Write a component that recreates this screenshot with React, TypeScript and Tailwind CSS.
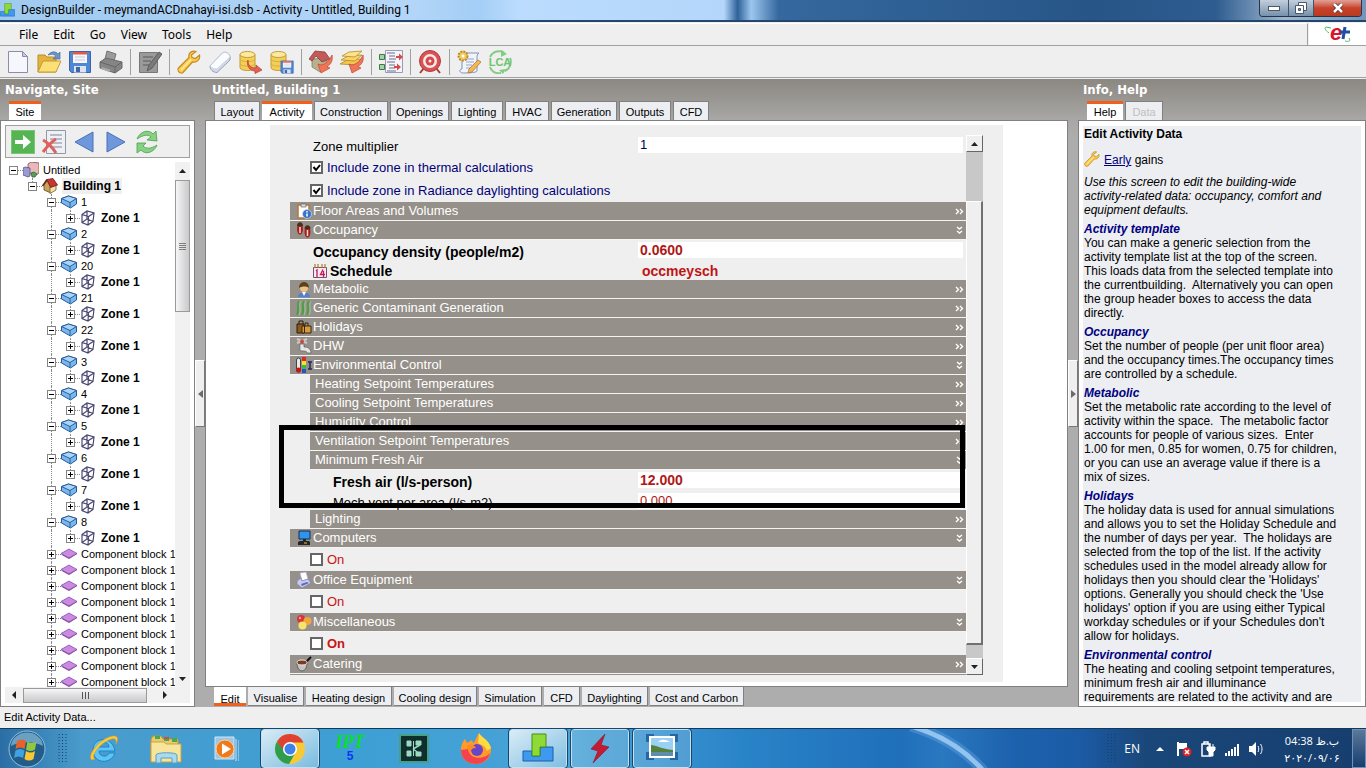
import type { ReactNode } from 'react';
import clsx from 'clsx';

/* ---------- toolbar icons (24px) ---------- */

function Svg({ children, size = 24, view = 24 }: { children: ReactNode; size?: number; view?: number }) {
  return (
    <svg width={size} height={size} viewBox={`0 0 ${view} ${view}`} fill="none" aria-hidden="true" className="block shrink-0">
      {children}
    </svg>
  );
}

const NewIcon = () => (
  <Svg>
    <path d="M2.5 1.5h14l5 5v16h-19z" fill="#f6f6fd" stroke="#8c8ca8" />
    <path d="M16.500 1.500v5h5z" fill="#c9c9e6" stroke="#8c8ca8" />
  </Svg>
);

const OpenIcon = () => (
  <Svg>
    <path d="M1 22V5h7l2 2h9v15z" fill="#e3b33c" stroke="#b98d2a" />
    <path d="M1 22 6 11h18l-5 11z" fill="#fbdf77" stroke="#c79a32" />
    <path d="M11 5c3-4 8-4 10-1l2-2v7h-7l3-3c-2-2-5-2-8-1z" fill="#6d93c4" stroke="#476f9f" strokeWidth=".7" />
  </Svg>
);

const SaveShape = ({ x = 0, y = 0, s = 1 }: { x?: number; y?: number; s?: number }) => (
  <g transform={`translate(${x} ${y}) scale(${s})`}>
    <path d="M1.500 1.500h21v21h-19l-2-2z" fill="#4f86d6" stroke="#3a65a8" />
    <path d="M5 2h14v11H5z" fill="#f7f7fa" />
    <path d="M5 2h14v2.500H5z" fill="#e8574b" />
    <path d="M7 7h10M7 10h10" stroke="#c5c8d4" />
    <path d="M6 16h12v6.500H6z" fill="#dde3ee" />
    <path d="M8 17h4v5H8z" fill="#3e68a8" />
  </g>
);
const SaveIcon = () => <Svg><SaveShape /></Svg>;

const PrintIcon = () => (
  <Svg>
    <path d="M8 1l9 3-2 7-9-2z" fill="#9b9b9b" stroke="#757575" />
    <path d="M1 12l6-4 16 4v6l-7 5-15-5z" fill="#858585" stroke="#6a6a6a" />
    <path d="M1 12l15 5 7-5M16 17v6" stroke="#666" />
    <path d="M3 17l9 3-2 2-8-3z" fill="#a9a9a9" />
  </Svg>
);

const EditIcon = () => (
  <Svg>
    <path d="M1.500 2.500h18v20h-18z" fill="#9a9a9a" stroke="#777" />
    <path d="M5 7h10M5 11h8M5 15h6" stroke="#707070" strokeWidth="1.500" />
    <path d="M21 2l3 2-10 14-5 3 2-6z" fill="#7b7b7b" stroke="#5f5f5f" />
  </Svg>
);

const WrenchIcon = ({ size = 24 }: { size?: number }) => (
  <Svg size={size}>
    <path
      d="M19 1.500c-4-1.500-8 1.500-7 6L1.500 18c-1 1-.5 3 .5 4s3 1.500 4 .5L15.500 12c4 1 8-2.500 7-7l-4 3.500-3.500-1L14.500 5z"
      fill="#fbcc4b"
      stroke="#c58a23"
      strokeWidth="1.200"
    />
    <path d="M4 20 14 9.500" stroke="#fdeaa5" strokeWidth="1.500" />
  </Svg>
);

const EraserIcon = () => (
  <Svg>
    <path d="M2 16 15 2.500c3-1 7 1.500 7 4.500v3L9 22.500c-4 0-7-3-7-6.500z" fill="#d5ddec" stroke="#929eb8" />
    <path d="M2 16 15 2.500c3-1 7 1.500 7 4.500L9 19c-4 0-5-1-7-3z" fill="#fafcff" stroke="#b3bdd2" strokeWidth=".6" />
  </Svg>
);

const DbShape = () => (
  <g>
    <path d="M1 4.500v13c0 4 15 4 15 0v-13z" fill="#f3cf57" stroke="#c49a34" />
    <path d="M1 9c0 3.500 15 3.500 15 0M1 13.500c0 3.500 15 3.500 15 0" stroke="#d8ae3e" />
    <ellipse cx="8.500" cy="4.500" rx="7.500" ry="3" fill="#fdeaa0" stroke="#c49a34" />
  </g>
);
const DbLoadIcon = () => (
  <Svg>
    <DbShape />
    <path d="M9 10c0 6 3 8 8 8v-3l6 5-7 3.500V21c-5 0-9-5-7-11z" fill="#e4604f" stroke="#b53d30" strokeWidth=".7" />
  </Svg>
);
const DbSaveIcon = () => (
  <Svg>
    <DbShape />
    <SaveShape x={10} y={10} s={0.59} />
  </Svg>
);

const HouseShape = () => (
  <g>
    <path d="M3 9v8l8 5 7-5V8z" fill="#b9b08f" stroke="#7a7460" strokeWidth=".7" />
    <path d="M0 9 6 1l10 1 5 7-8 3-6-6-4 5z" fill="#c25a58" stroke="#7d3433" strokeWidth=".7" />
  </g>
);
const RedArrow = () => (
  <path d="M23 5c1 6-1 9-5 12l3 1-9 5-3-9 3 1c5-1 8-4 11-10z" fill="#ef7458" stroke="#bd4a33" strokeWidth=".7" />
);
const HouseIcon = () => <Svg><HouseShape /><RedArrow /></Svg>;
const LayersIcon = () => (
  <Svg>
    <path d="M0 14l7-4 15-1-7 6z" fill="#f5c64c" stroke="#b58a27" strokeWidth=".8" />
    <path d="M1 10l7-4 14-1-7 6z" fill="#f9d467" stroke="#b58a27" strokeWidth=".8" />
    <path d="M2 6l7-4 13-1-7 6z" fill="#fde48c" stroke="#b58a27" strokeWidth=".8" />
    <RedArrow />
  </Svg>
);

const OptionsIcon = () => (
  <Svg>
    <path d="M6.500.5h17v22h-17z" fill="#f4f4fa" stroke="#9a9ab4" />
    <path d="M8 3h8M10 6h6M10 9h7M8 12h8M10 15h6M10 18h6M8 21h9" stroke="#6d6d86" />
    <path d="M.5 4.500h5v5h-5zM.5 14.500h5v5h-5z" fill="#a6d0a8" stroke="#3e7a46" />
    <path d="M17 6h3V3.500L24 7l-4 3.500V8h-3zM15 16h3v-2.500l4 3.500-4 3.500V18h-3z" fill="#d84a44" />
  </Svg>
);

const TargetIcon = () => (
  <Svg>
    <path d="M6 18l-4 5M18 18l4 5" stroke="#a33c3c" strokeWidth="2" />
    <circle cx="12" cy="11" r="10.500" fill="#dc5252" stroke="#b23a3a" />
    <circle cx="12" cy="11" r="7" fill="#f6eded" />
    <circle cx="12" cy="11" r="4.500" fill="#d94848" />
    <circle cx="12" cy="11" r="1.500" fill="#f6eded" />
  </Svg>
);

const ReportIcon = () => (
  <Svg>
    <path d="M5 3h17c-2 1-2 3-2 5v13c0 2-14 2-14 2-4 0-4-4-1-4z" fill="#f2f4fb" stroke="#7d92b8" />
    <path d="M9 9h8M9 12h8M9 15h6M9 18h5" stroke="#93a5c6" />
    <circle cx="6" cy="6" r="4.500" fill="#f3cc60" stroke="#b98c2c" strokeDasharray="2 1" strokeWidth="2" />
    <circle cx="6" cy="6" r="1.500" fill="#fff" />
    <path d="M21 10l3 2-9 10-4 1 1-4z" fill="#f4b756" stroke="#a9702a" strokeWidth=".7" />
  </Svg>
);

const LcaIcon = () => (
  <Svg>
    <path d="M2 7C5 1 12 0 16 2.500M22 8c2 4 0 11-5 13M13 23C7 24 3 21 2 17" stroke="#84cc84" strokeWidth="2" />
    <path d="M13 0l6 4-6 3zM15 24l-4-4 7-1z" fill="#84cc84" />
    <text x="12" y="16" textAnchor="middle" fontSize="11" fontWeight="bold" fill="#6fc26f" fontFamily="Liberation Sans, sans-serif">LCA</text>
  </Svg>
);

/* ---------- navigator icons ---------- */

const GoIcon = () => (
  <Svg>
    <rect x=".5" y=".5" width="23" height="23" fill="#56b553" stroke="#7cc479" />
    <path d="M4 10h8V5l8 7-8 7v-5H4z" fill="#fff" />
  </Svg>
);
const DeleteIcon = () => (
  <Svg>
    <path d="M4.500.5h19v23h-19z" fill="#eef0f6" stroke="#9099a8" />
    <path d="M8 5h12M8 9h12M8 13h12M8 17h12" stroke="#7c8799" />
    <path d="M1 10c4 2 10 8 13 13M14 9C9 12 4 18 1 22" stroke="#e0605c" strokeWidth="3" />
  </Svg>
);
const PrevIcon = () => <Svg><path d="M20 2v20L2 12z" fill="#6e97dc" stroke="#4b70b8" /></Svg>;
const NextIcon = () => <Svg><path d="M3 2v20l18-10z" fill="#6e97dc" stroke="#4b70b8" /></Svg>;
const RefreshIcon = () => (
  <Svg>
    <path d="M2 9C5 1 14-1 18 4l3-3 1 10-10-1 4-3c-3-3-8-2-14 2z" fill="#86d183" stroke="#4e9f4e" strokeWidth=".8" />
    <path d="M22 15c-3 8-12 10-16 5l-4 3V13h9l-3 3c3 3 8 3 14-1z" fill="#86d183" stroke="#4e9f4e" strokeWidth=".8" />
  </Svg>
);

/* ---------- tree icons (16px) ---------- */

const SiteIcon = () => (
  <Svg size={16} view={16}>
    <path d="M5 2l3-2 8 1v10l-3 2-8-2z" fill="#e9b9b9" stroke="#7d4a4a" strokeWidth=".8" />
    <path d="M0 6l2-1 5 1v8l-2 1-5-2z" fill="#9c9ad0" stroke="#54528a" strokeWidth=".8" />
    <path d="M8 11l3-1 3 2-2 3-3 0z" fill="#57a05b" stroke="#2f6a33" strokeWidth=".8" />
  </Svg>
);
const BuildingIcon = () => (
  <Svg size={16} view={16}>
    <path d="M2 7l3-4 4 6v6L2 12z" fill="#c9a35c" stroke="#5e4a20" strokeWidth=".8" />
    <path d="M8 9l6-2v5l-6 3.500z" fill="#f5e0a8" stroke="#6f5a2d" strokeWidth=".8" />
    <path d="M5 1.500 11 .5 15.500 7 8.500 9.500z" fill="#c9352f" stroke="#6d1d18" strokeWidth=".8" />
    <path d="M5 1.500.5 8" stroke="#6d1d18" strokeWidth="1.500" />
  </Svg>
);
const BlockIcon = () => (
  <Svg size={16} view={16}>
    <path d="M.5 4.500 7.500 2l8 2.500v5.500l-6 4-9-5z" fill="#77b7f2" stroke="#2c5c94" />
    <path d="M.5 4.500 9 8.500l6.500-4L7.500 2z" fill="#a9d5fb" stroke="#2c5c94" />
    <path d="M9 8.500v5" stroke="#2c5c94" />
  </Svg>
);
const ZoneIcon = () => (
  <Svg size={16} view={16}>
    <path d="M2 4.500 7 1l7 2-1 8.500-5 3.500-6-2.500zM2 4.500l6.500 2L14 3M8.500 6.500 8 15M7 1v8L2 12.500M7 9l6 2.500" stroke="#4b4770" strokeWidth="1.200" />
  </Svg>
);
const ComponentIcon = () => (
  <Svg size={16} view={16}>
    <path d="M0 8.500 8 13l8-5v-1z" fill="#7b3f94" />
    <path d="M0 7.500 8 3l8 4.500-8 4.500z" fill="#c98be0" stroke="#8a4ba6" strokeWidth=".8" />
  </Svg>
);

/* ---------- section icons (16px) ---------- */

const sectionIcons: Record<string, ReactNode> = {
  floor: (
    <Svg size={16} view={16}>
      <path d="M2 2h11v13H2z" fill="#fff" stroke="#b5773a" strokeWidth="1.500" />
      <path d="M5 1h5v3H5z" fill="#dcdcdc" stroke="#666" strokeWidth=".7" />
      <circle cx="11" cy="11" r="4.500" fill="#3774c8" stroke="#cfe0f6" strokeWidth=".7" />
      <path d="M11 10.500v3M11 8v1.500" stroke="#fff" strokeWidth="1.500" />
    </Svg>
  ),
  occupancy: (
    <Svg size={16} view={16}>
      <ellipse cx="4" cy="7" rx="3" ry="5.500" fill="#a71f1f" />
      <path d="M1 4c0-5 6-5 6 0z" fill="#463019" />
      <ellipse cx="11.500" cy="10" rx="3" ry="5.500" fill="#a71f1f" />
      <path d="M8.500 7c0-5 6-5 6 0z" fill="#463019" />
      <path d="M4 5v6M11.500 8v6" stroke="#f0d8c8" strokeWidth="1.500" />
    </Svg>
  ),
  metabolic: (
    <Svg size={16} view={16}>
      <path d="M2 16c0-6 12-6 12 0z" fill="#4d83d3" />
      <path d="M6 11l2 4 2-4z" fill="#fff" />
      <circle cx="8" cy="7" r="4" fill="#edc08c" />
      <path d="M3 7c0-8 10-8 10 0-2-2-7-2-10 0z" fill="#59411c" />
    </Svg>
  ),
  contaminant: (
    <Svg size={16} view={16}>
      <path d="M3 1C0 5 4 9 1 15M8 1C5 5 9 9 6 15M13 1c-3 4 1 8-2 14" stroke="#4f9e45" strokeWidth="2" />
      <path d="M5 1C2 5 6 9 3 15M10 1C7 5 11 9 8 15M15 1c-3 4 1 8-2 14" stroke="#a5d39a" strokeWidth=".8" />
    </Svg>
  ),
  holidays: (
    <Svg size={16} view={16}>
      <path d="M1 5h7v9H1z" fill="#8a5a1e" stroke="#2c1b06" />
      <path d="M3 5V2h4v3" stroke="#2c1b06" />
      <path d="M6 7h9v7H6z" fill="#d79a3c" stroke="#3b2508" />
      <path d="M9 7V4h3v3M8.500 7v7" stroke="#3b2508" />
    </Svg>
  ),
  dhw: (
    <Svg size={16} view={16}>
      <path d="M1 1l10 4M11 1 1 5" stroke="#c9c9c9" strokeWidth="2" />
      <circle cx="6" cy="3.500" r="2" fill="#d0492f" />
      <path d="M4 6h4v3c3 0 7 1 7 6h-4c0-2-2-2-5-2s-2-3-2-7z" fill="#e6e6e6" stroke="#5f5f5f" strokeWidth=".7" />
    </Svg>
  ),
  environment: (
    <Svg size={16} view={16}>
      <rect x="0.500" y="1" width="4" height="14" rx="2" fill="#e8e8e8" stroke="#444" />
      <circle cx="2.500" cy="13" r="2.500" fill="#c5151c" />
      <path d="M6 0h4v4H6z" fill="#e52520" />
      <path d="M6 4h4v4H6z" fill="#f3e531" />
      <path d="M6 8h4v4H6z" fill="#41b73b" />
      <path d="M6 12h4v4H6z" fill="#2c4fd0" />
      <path d="M12 5h4M12 12h4M14 5v7" stroke="#222a55" strokeWidth="1.500" />
    </Svg>
  ),
  computers: (
    <Svg size={16} view={16}>
      <path d="M3 1h11v8H3z" fill="#2b95f0" stroke="#1b2c4a" />
      <path d="M7 9h3v2H7zM2 12l2-1h9l1 1v3H2z" fill="#22252c" />
      <path d="M8 13h3" stroke="#dccd35" />
    </Svg>
  ),
  office: (
    <Svg size={16} view={16}>
      <path d="M4 1l6-1 2 7-6 2z" fill="#fff" stroke="#aab0d4" strokeWidth=".7" />
      <path d="M1 9l4-3 1 3 6-2 3 4-9 5-5-4z" fill="#c7cbee" stroke="#7d82b4" strokeWidth=".7" />
      <path d="M5 12l6-2 2 1-7 3z" fill="#6468ac" />
    </Svg>
  ),
  misc: (
    <Svg size={16} view={16}>
      <circle cx="5" cy="5" r="4" fill="#d93434" />
      <circle cx="11.500" cy="7" r="4" fill="#f2a53d" />
      <circle cx="6.500" cy="11.500" r="4" fill="#fbe36a" />
      <circle cx="4" cy="4" r="1.200" fill="#f6a3a3" />
    </Svg>
  ),
  catering: (
    <Svg size={16} view={16}>
      <path d="M9 7l6-6" stroke="#111" strokeWidth="2" />
      <path d="M1 6c0 5 1 8 5 9 4-1 5-4 5-9z" fill="#c4c4c4" stroke="#444" strokeWidth=".7" />
      <ellipse cx="6" cy="6.500" rx="5" ry="2.500" fill="#7a3a1e" stroke="#e8e8e8" />
    </Svg>
  ),
};

const CalendarIcon = () => (
  <Svg size={14} view={14}>
    <path d="M.5 3.500h13v10H.5z" fill="#fbeaf1" stroke="#77506a" />
    <path d="M2 0v4M5 0v4M9 0v4M12 0v4" stroke="#b07a2c" strokeWidth="1.200" />
    <path d="M3 7l1-1v7M10 5.500 7.500 10.500H12M10.500 7v6" stroke="#c4195a" strokeWidth="1.300" />
  </Svg>
);

/* ---------- generic pieces ---------- */

type Tab = { label: string; width: string; active?: boolean; disabled?: boolean };

const topTabs: Tab[] = [
  { label: 'Layout', width: 'w-[46px]' },
  { label: 'Activity', width: 'w-[50px]', active: true },
  { label: 'Construction', width: 'w-[74px]' },
  { label: 'Openings', width: 'w-[59px]' },
  { label: 'Lighting', width: 'w-[52px]' },
  { label: 'HVAC', width: 'w-[44px]' },
  { label: 'Generation', width: 'w-[66px]' },
  { label: 'Outputs', width: 'w-[52px]' },
  { label: 'CFD', width: 'w-[36px]' },
];

const bottomTabs: Tab[] = [
  { label: 'Edit', width: 'w-[32px]', active: true },
  { label: 'Visualise', width: 'w-[56px]' },
  { label: 'Heating design', width: 'w-[86px]' },
  { label: 'Cooling design', width: 'w-[83px]' },
  { label: 'Simulation', width: 'w-[63px]' },
  { label: 'CFD', width: 'w-[36px]' },
  { label: 'Daylighting', width: 'w-[66px]' },
  { label: 'Cost and Carbon', width: 'w-[94px]' },
];

function tabStyle(tab: Tab, bottom?: boolean) {
  if (bottom) {
    return tab.active
      ? 'bg-white border-b-[3px] border-b-[#f0601c] pt-[5px]'
      : 'bg-[#eceef2] border-r border-b border-[#808080] pt-[3px]';
  }
  return tab.active
    ? 'bg-white border-t-[3px] border-t-[#f0601c]'
    : 'bg-[#eceef2] border-t border-r border-l border-[#808080] pt-[2px]';
}

function Tabs({ tabs, bottom }: { tabs: Tab[]; bottom?: boolean }) {
  return (
    <div className={clsx('flex shrink-0 gap-[2px] pl-[9px]', bottom ? 'h-5 pb-px' : 'h-[19px]')}>
      {tabs.map((tab) => (
        <button
          key={tab.label}
          disabled={tab.disabled}
          className={clsx(
            'h-full shrink-0 whitespace-nowrap text-center text-[11px] leading-[14px]',
            tab.width,
            tabStyle(tab, bottom),
            tab.disabled && 'text-[#c0c0c0]',
          )}
        >
          {tab.label}
        </button>
      ))}
    </div>
  );
}

function Splitter({ dir }: { dir: 'left' | 'right' }) {
  return (
    <div className="flex w-[10px] shrink-0 items-start pt-[281px]">
      <button aria-label={`Collapse ${dir}`} className="flex h-[67px] w-full items-center justify-center border border-t-white border-r-[#777] border-b-[#777] border-l-white bg-[#efefef]">
        <svg width="5" height="8" viewBox="0 0 5 8">
          <path d={dir === 'left' ? 'M5 0v8L0 4z' : 'M0 0v8l5-4z'} fill="#6b6b6b" />
        </svg>
      </button>
    </div>
  );
}

const Arrow = ({ d }: { d: string }) => (
  <svg width="8" height="8" viewBox="0 0 8 8"><path d={d} fill="#222" /></svg>
);
const UP = 'M0 6h7L3.500 2z';
const DOWN = 'M0 2h7L3.500 6z';
const LEFT = 'M6 0v8L2 4z';
const RIGHT = 'M2 0v8l4-4z';

/* ---------- navigator ---------- */

type Node = { label: string; depth: number; kind: 'site' | 'building' | 'block' | 'zone' | 'component' };

const tree: Node[] = [
  { label: 'Untitled', depth: 0, kind: 'site' },
  { label: 'Building 1', depth: 1, kind: 'building' },
  ...['1', '2', '20', '21', '22', '3', '4', '5', '6', '7', '8'].flatMap((n): Node[] => [
    { label: n, depth: 2, kind: 'block' },
    { label: 'Zone 1', depth: 3, kind: 'zone' },
  ]),
  ...Array.from({ length: 9 }, (): Node => ({ label: 'Component block 1', depth: 2, kind: 'component' })),
];

const nodeIcons: Record<Node['kind'], ReactNode> = {
  site: <SiteIcon />,
  building: <BuildingIcon />,
  block: <BlockIcon />,
  zone: <ZoneIcon />,
  component: <ComponentIcon />,
};

const indents = ['pl-0', 'pl-[19px]', 'pl-[38px]', 'pl-[57px]'];

function TreeRow({ node }: { node: Node }) {
  const open = node.kind !== 'zone' && node.kind !== 'component';
  const bold = node.kind === 'zone' || node.kind === 'building';
  return (
    <li className={clsx('relative flex h-4 items-center', indents[node.depth])}>
      {node.depth >= 2 && <span className="absolute top-0 left-[42px] h-full border-l border-dotted border-[#888]" />}
      {node.depth === 3 && <span className="absolute top-0 left-[61px] h-2 border-l border-dotted border-[#888]" />}
      {node.depth === 1 && <span className="absolute top-0 left-[23px] h-2 border-l border-dotted border-[#888]" />}
      <button aria-label={open ? 'Collapse' : 'Expand'} className="relative block size-[9px] shrink-0">
        <svg width="9" height="9" viewBox="0 0 9 9" className="block">
          <rect x=".5" y=".5" width="8" height="8" fill="#fff" stroke="#848484" />
          <path d={open ? 'M2 4.500h5' : 'M2 4.500h5M4.500 2v5'} stroke="#000" />
        </svg>
      </button>
      <span className="w-[5px] shrink-0 border-t border-dotted border-[#888]" />
      {nodeIcons[node.kind]}
      <span
        className={clsx(
          'ml-1 leading-4 whitespace-nowrap',
          bold ? 'px-px text-[12px] font-bold' : 'text-[11px]',
          node.kind === 'building' && 'bg-[#efefef]',
        )}
      >
        {node.label}
      </span>
    </li>
  );
}

function Navigator() {
  return (
    <aside className="flex w-[195px] shrink-0 flex-col">
      <PaneTitle className="pl-[5px]">Navigate, Site</PaneTitle>
      <Tabs tabs={[{ label: 'Site', width: 'w-[32px]', active: true }]} />
      <div className="flex min-h-0 flex-1 flex-col border border-[#808080] bg-white px-1 pt-1 pb-[3px]">
        <div className="flex h-[33px] shrink-0 items-center gap-[7px] border border-[#a0a0a0] bg-[#efefef] pl-[5px]">
          <button aria-label="Go"><GoIcon /></button>
          <button aria-label="Delete"><DeleteIcon /></button>
          <button aria-label="Previous"><PrevIcon /></button>
          <button aria-label="Next"><NextIcon /></button>
          <button aria-label="Refresh"><RefreshIcon /></button>
        </div>
        <div className="mt-1 flex min-h-0 flex-1">
          <ul className="min-w-0 flex-1 overflow-hidden pl-1">
            {tree.map((node, i) => <TreeRow key={i} node={node} />)}
          </ul>
          <div className="flex w-[15px] shrink-0 flex-col items-center bg-[#f1f1f1]">
            <span className="flex h-[18px] items-center"><Arrow d={UP} /></span>
            <div className="flex h-[132px] w-[15px] items-center justify-center border border-[#9a9a9a] bg-linear-to-r from-[#f6f6f6] to-[#c9c9cc]">
              <svg width="7" height="7" viewBox="0 0 7 7"><path d="M0 .5h7M0 2.500h7M0 4.500h7M0 6.500h7" stroke="#666" strokeWidth=".8" /></svg>
            </div>
            <span className="mt-auto flex h-4 items-center"><Arrow d={DOWN} /></span>
          </div>
        </div>
        <div className="flex h-4 shrink-0 items-center bg-[#f1f1f1] pr-4">
          <span className="flex w-[18px] justify-center"><Arrow d={LEFT} /></span>
          <div className="flex h-[15px] w-[124px] items-center justify-center border border-[#9a9a9a] bg-linear-to-b from-[#f6f6f6] to-[#c9c9cc]">
            <svg width="7" height="7" viewBox="0 0 7 7"><path d="M.5 0v7M3.500 0v7M6.500 0v7" stroke="#555" /></svg>
          </div>
          <span className="ml-auto flex w-[18px] justify-center"><Arrow d={RIGHT} /></span>
        </div>
      </div>
    </aside>
  );
}

function PaneTitle({ children, className }: { children: ReactNode; className?: string }) {
  return (
    <h2 className={clsx("h-[22px] shrink-0 font-['DejaVu_Sans_Condensed','DejaVu_Sans',sans-serif] text-[13px] leading-[22px] font-bold text-white", className)}>
      {children}
    </h2>
  );
}

/* ---------- activity form ---------- */

function Section({ title, icon, open, sub }: { title: string; icon?: string; open?: boolean; sub?: boolean }) {
  return (
    <button
      type="button"
      className={clsx(
        'flex h-[19px] shrink-0 items-center border-b border-[#f4f4f4] bg-[#959089] pr-[2px] text-[13px] leading-4 text-white',
        sub ? 'ml-5 pl-[5px]' : 'gap-px pl-[6px]',
      )}
    >
      {icon && sectionIcons[icon]}
      <span>{title}</span>
      <svg width="9" height="9" viewBox="0 0 9 9" fill="none" className="ml-auto">
        <path d={open ? 'M2 1l2.500 2L7 1M2 5l2.500 2L7 5' : 'M1 2l2.500 2.500L1 7M5 2l2.500 2.500L5 7'} stroke="#fff" strokeWidth="1.400" />
      </svg>
    </button>
  );
}

function Field({ id, label, value, bold, sub, navy, tall }: { id: string; label: string; value: string; bold?: boolean; sub?: boolean; navy?: boolean; tall?: boolean }) {
  return (
    <div className={clsx('flex shrink-0 items-start pt-[2px] pr-[3px]', tall ? 'h-[21px]' : 'h-[19px]', bold ? 'text-[14px] font-bold' : 'text-[13px]')}>
      <label htmlFor={id} className={clsx('w-[348px] shrink-0 pt-[2px] leading-4', sub ? 'pl-[43px]' : 'pl-[23px]')}>{label}</label>
      <input
        id={id}
        defaultValue={value}
        className={clsx('h-4 min-w-0 flex-1 bg-white px-[2px] leading-4 outline-none', navy ? 'text-[#000050]' : 'text-[#b01818]')}
      />
    </div>
  );
}

function Check({ id, label, checked, navy, bold }: { id: string; label: string; checked?: boolean; navy?: boolean; bold?: boolean }) {
  return (
    <div className="flex h-[23px] shrink-0 items-center gap-1 pl-5 text-[13px]">
      <span className="relative flex size-[13px]">
        <input id={id} type="checkbox" defaultChecked={checked} className="peer size-[13px] appearance-none border-2 border-[#666] bg-white" />
        <svg width="13" height="13" viewBox="0 0 13 13" fill="none" className="pointer-events-none absolute inset-0 hidden peer-checked:block">
          <path d="M3.500 6l2.500 3 4-5" stroke="#000" strokeWidth="2" />
        </svg>
      </span>
      <label htmlFor={id} className={clsx('leading-4', navy ? 'text-[#000078]' : 'text-[#c81414]', bold && 'font-bold')}>{label}</label>
    </div>
  );
}

function ActivityForm() {
  return (
    <div className="relative mx-16 my-1 flex min-h-0 flex-1 bg-[#efefef] px-5 pt-[10px] pb-[7px]">
      <form className="flex min-w-0 flex-1 flex-col overflow-hidden">
        <Field id="multiplier" label="Zone multiplier" value="1" navy tall />
        <Check id="thermal" label="Include zone in thermal calculations" checked navy />
        <Check id="radiance" label="Include zone in Radiance daylighting calculations" checked navy />
        <Section icon="floor" title="Floor Areas and Volumes" />
        <Section icon="occupancy" title="Occupancy" open />
        <Field id="density" label="Occupancy density (people/m2)" value="0.0600" bold tall />
        <div className="flex h-[19px] shrink-0 items-center text-[14px] font-bold">
          <div className="flex w-[348px] shrink-0 items-center gap-[3px] pl-[23px]">
            <CalendarIcon />
            <label htmlFor="schedule" className="leading-4">Schedule</label>
          </div>
          <input id="schedule" defaultValue="occmeysch" className="h-4 min-w-0 flex-1 px-1 leading-4 text-[#c01414] outline-none" />
        </div>
        <Section icon="metabolic" title="Metabolic" />
        <Section icon="contaminant" title="Generic Contaminant Generation" />
        <Section icon="holidays" title="Holidays" />
        <Section icon="dhw" title="DHW" />
        <Section icon="environment" title="Environmental Control" open />
        <Section sub title="Heating Setpoint Temperatures" />
        <Section sub title="Cooling Setpoint Temperatures" />
        <Section sub title="Humidity Control" />
        <Section sub title="Ventilation Setpoint Temperatures" />
        <Section sub title="Minimum Fresh Air" open />
        <Field id="fresh" label="Fresh air (l/s-person)" value="12.000" sub bold tall />
        <Field id="mech" label="Mech vent per area (l/s-m2)" value="0.000" sub />
        <Section sub title="Lighting" />
        <Section icon="computers" title="Computers" open />
        <Check id="computers" label="On" />
        <Section icon="office" title="Office Equipment" open />
        <Check id="office" label="On" />
        <Section icon="misc" title="Miscellaneous" open />
        <Check id="misc" label="On" bold />
        <Section icon="catering" title="Catering" />
        <div className="h-[2px] shrink-0 bg-[#959089]" />
      </form>
      <div className="flex w-[17px] shrink-0 flex-col bg-[#c8c8c8]">
        <button aria-label="Scroll up" className="flex h-[17px] items-center justify-center border border-t-white border-r-[#666] border-b-[#666] border-l-white bg-[#efefef]"><Arrow d={UP} /></button>
        <div className="mt-[49px] mb-[13px] flex-1 border-t border-r-2 border-b-2 border-l border-t-white border-r-[#707070] border-b-[#707070] border-l-white bg-[#efefef]" />
        <button aria-label="Scroll down" className="flex h-[17px] items-center justify-center border border-t-white border-r-[#666] border-b-[#666] border-l-white bg-[#efefef]"><Arrow d={DOWN} /></button>
      </div>
      {/* highlight around the fresh air group */}
      <div className="pointer-events-none absolute top-[300px] right-[38px] left-[9px] h-[83px] border-[5px] border-black" />
    </div>
  );
}

/* ---------- help ---------- */

const helpTopics = [
  {
    title: 'Activity template',
    lines: [
      'You can make a generic selection from the',
      'activity template list at the top of the screen.',
      'This loads data from the selected template into',
      'the currentbuilding.  Alternatively you can open',
      'the group header boxes to access the data',
      'directly.',
    ],
  },
  {
    title: 'Occupancy',
    lines: ['Set the number of people (per unit floor area)', 'and the occupancy times.The occupancy times', 'are controlled by a schedule.'],
  },
  {
    title: 'Metabolic',
    lines: [
      'Set the metabolic rate according to the level of',
      'activity within the space.  The metabolic factor',
      'accounts for people of various sizes.  Enter',
      '1.00 for men, 0.85 for women, 0.75 for children,',
      'or you can use an average value if there is a',
      'mix of sizes.',
    ],
  },
  {
    title: 'Holidays',
    lines: [
      'The holiday data is used for annual simulations',
      'and allows you to set the Holiday Schedule and',
      'the number of days per year.  The holidays are',
      'selected from the top of the list. If the activity',
      'schedules used in the model already allow for',
      "holidays then you should clear the 'Holidays'",
      "options. Generally you should check the 'Use",
      "holidays' option if you are using either Typical",
      "workday schedules or if your Schedules don't",
      'allow for holidays.',
    ],
  },
  {
    title: 'Environmental control',
    lines: ['The heating and cooling setpoint temperatures,', 'minimum fresh air and illuminance', 'requirements are related to the activity and are'],
  },
];

function Help() {
  return (
    <aside className="flex w-[288px] shrink-0 flex-col">
      <PaneTitle className="pl-[5px]">Info, Help</PaneTitle>
      <Tabs tabs={[{ label: 'Help', width: 'w-[36px]', active: true }, { label: 'Data', width: 'w-[38px]', disabled: true }]} />
      <div className="flex min-h-0 flex-1 flex-col border border-[#808080] bg-white p-1 pt-[5px]">
        <article className="min-h-0 flex-1 overflow-hidden bg-[#eceef2] pl-px text-[12px] leading-[14px] whitespace-pre">
          <h3 className="leading-4 font-bold">Edit Activity Data</h3>
          <p className="mt-[9px] flex items-end gap-1">
            <WrenchIcon size={16} />
            <span><a href="#early" className="text-[#000080] underline">Early</a> gains</span>
          </p>
          <p className="mt-[8px] italic">{'Use this screen to edit the building-wide\nactivity-related data: occupancy, comfort and\nequipment defaults.'}</p>
          {helpTopics.map((topic) => (
            <section key={topic.title} className="mt-[5px]">
              <h4 className="font-bold text-[#000080] italic">{topic.title}</h4>
              <p>{topic.lines.join('\n')}</p>
            </section>
          ))}
        </article>
      </div>
    </aside>
  );
}

/* ---------- taskbar ---------- */

const BuilderIcon = ({ size = 32 }: { size?: number }) => (
  <Svg size={size} view={32}>
    <path d="M1 18h9v5h8v-9h13v14H1z" fill="#3d9af0" stroke="#1b5ea8" />
    <path d="M10 1h14v13h-6v9h-8z" fill="#8edb37" stroke="#4c8b16" />
  </Svg>
);

const taskItems: { name: string; framed?: boolean; lit?: boolean; icon: ReactNode }[] = [
  {
    name: 'Internet Explorer',
    icon: (
      <Svg size={32} view={32}>
        <path d="M27 18H11c0 6 8 7 10 2h6C23 32 5 31 5 17S25 3 27 18zM11 14h10c0-6-9-6-10 0z" fill="#5cc5f5" stroke="#2184c6" />
        <path d="M4 27C-2 24 11 5 25 3c6-1 5 5 3 8 1-6-2-6-7-4C11 11 2 24 7 26z" fill="#fbcb3c" stroke="#d79a1e" strokeWidth=".6" />
      </Svg>
    ),
  },
  {
    name: 'Explorer',
    icon: (
      <Svg size={32} view={32}>
        <path d="M1 6l2-3h8l2 3h15v22H1z" fill="#e9cb6a" stroke="#b99335" />
        <path d="M5 3h5v3H5zM14 4h5v4h-5zM22 5h5v4h-5z" fill="#4aa84d" />
        <path d="M14 4h5v2h-5z" fill="#d94b3f" />
        <path d="M1 9h13l2 2h15v18H1z" fill="#f8e59c" stroke="#c6a347" />
        <path d="M6 30V22c0-3 21-3 21 0v8h-5v-5H11v5z" fill="#a9daf0" stroke="#5a9fc4" />
      </Svg>
    ),
  },
  {
    name: 'Media Player',
    icon: (
      <Svg size={32} view={32}>
        <path d="M23 6h2v22h-2zM26 7h1v21h-1z" fill="#8fc0e2" />
        <path d="M3 4h19v22H3z" fill="#9cc6e4" stroke="#d2e6f4" />
        <circle cx="13" cy="16" r="9" fill="#ee7a1c" stroke="#fbcf9c" />
        <path d="M10 10.500v11l9-5.500z" fill="#fff" />
      </Svg>
    ),
  },
  {
    name: 'Chrome',
    framed: true,
    lit: true,
    icon: (
      <Svg size={32} view={32}>
        <circle cx="16" cy="16" r="15" fill="#f7c934" />
        <path d="M3 8.500A15 15 0 0 1 29.500 9.500H16L10 20z" fill="#df4132" />
        <path d="M3 8.500A15 15 0 0 0 15 31l6.500-11.500-9 2z" fill="#2f9e4c" />
        <circle cx="16" cy="16" r="7" fill="#fff" />
        <circle cx="16" cy="16" r="5.500" fill="#4080ea" />
      </Svg>
    ),
  },
  {
    name: 'IPT',
    icon: (
      <span className="flex flex-col items-center pr-1 font-bold">
        <span className="font-['Liberation_Serif',serif] text-[18px] leading-[17px] text-[#08e020] italic">IPT</span>
        <span className="font-['Liberation_Mono',monospace] text-[12px] leading-[12px] text-[#0838f0]">5</span>
      </span>
    ),
  },
  {
    name: 'Camtasia',
    icon: (
      <Svg size={32} view={32}>
        <rect x="2" y="2" width="28" height="27" fill="#102f2c" stroke="#479f89" strokeWidth="2" />
        <path d="M9 8h4v5H9zM18 8h5v4h-5zM9 18h4v5H9zM18 19h5v4h-5zM15.500 8v15" fill="#9bd9c3" stroke="#9bd9c3" />
        <path d="M15 16l7-4M15 16l7 5" stroke="#9bd9c3" strokeWidth="1.500" />
      </Svg>
    ),
  },
  {
    name: 'Firefox',
    icon: (
      <Svg size={32} view={32}>
        <path d="M1 18C1 12 3 8 5 6l2 4 5-3 1 3c3-2 3-6 6-10 2 4 10 7 12 15 1 9-6 16-15 16S1 25 1 18z" fill="#ff9a2b" />
        <path d="M19 0c2 4 10 7 12 15l-4 3c-2-6-6-6-9-8z" fill="#ffdc42" />
        <path d="M1 17c0 9 7 14 15 14 7 0 13-5 14-11-5 6-20 8-22-4z" fill="#f4434e" />
        <circle cx="17" cy="17" r="6" fill="#6b45c9" />
        <path d="M7 13c4-3 7-1 9 2-4 0-6 2-5 5-3-2-4-5-4-7z" fill="#ff8b24" />
      </Svg>
    ),
  },
  { name: 'DesignBuilder', framed: true, lit: true, icon: <BuilderIcon /> },
  {
    name: 'Lightning',
    framed: true,
    icon: (
      <Svg size={32} view={32}>
        <path d="M21 1 7 16l7 2-5 12 16-16-8-2z" fill="#c41a32" stroke="#8f1226" strokeWidth=".6" />
      </Svg>
    ),
  },
  {
    name: 'Pictures',
    framed: true,
    icon: (
      <Svg size={32} view={32}>
        <path d="M1.500 9V2.500H8M24 2.500h6.500V9M30.500 19v6.500H24M8 25.500H1.500V19" stroke="#2466a8" strokeWidth="3" />
        <rect x="4" y="4" width="24" height="20" fill="#9ad0f3" stroke="#fff" strokeWidth="2" />
        <path d="M5 12c5 0 10 4 22 5v2H5z" fill="#54813b" />
        <path d="M5 19h22v4H5z" fill="#5f8ca8" />
        <path d="M12 9c4-4 9-2 12 0z" fill="#fff" />
      </Svg>
    ),
  },
];

const Grip = () => (
  <svg width="9" height="30" viewBox="0 0 9 30" fill="none" aria-hidden="true">
    <path d="M1 0v30M4.500 0v30M8 0v30" stroke="#153f66" strokeDasharray="1 2" />
  </svg>
);

function Taskbar() {
  return (
    <footer className="flex h-10 shrink-0 items-center border-t border-[#12395c] bg-[linear-gradient(90deg,#2b6ea5_0%,#4a9ccd_6%,#3d9fd4_26%,#4aa3d6_42%,#2a84c8_54%,#1f6fba_66%,#2a78c0_69%,#1d62ae_74%,#1b5ba5_79%,#1a4779_84%,#163e6e_100%)] text-white">
      <button aria-label="Start" className="ml-2">
        <Svg size={38} view={38}>
          <circle cx="19" cy="19" r="18" fill="#235d87" stroke="#8dc3e4" />
          <path d="M3 16C5-2 33-2 35 16c-10-5-22-5-32 0z" fill="#7cb1cf" opacity=".8" />
          <path d="M9 11c3-2 6-2 9 0l-1.500 8c-3-2-6-2-9 0z" fill="#e8622b" />
          <path d="M19.500 11.500c3 2 6 2 9 0L27 19.500c-3 2-6 2-9 0z" fill="#92c83e" />
          <path d="M7.500 20.500c3-2 6-2 9 0L15 28c-3-2-6-2-9 0z" fill="#3fa3e3" />
          <path d="M18 21c3 2 6 2 9 0l-1.500 8c-3 2-6 2-9 0z" fill="#fbc834" />
        </Svg>
      </button>
      <span className="ml-3"><Grip /></span>
      <div className="ml-2 flex h-full gap-1">
        {taskItems.map((item) => (
          <button
            key={item.name}
            aria-label={item.name}
            className={clsx(
              'flex h-full w-[58px] items-center justify-center',
              item.framed && 'rounded-[3px] border border-[#c3e0f2] outline outline-[#15486f]',
              item.framed && (item.lit ? 'bg-linear-to-br from-white/80 to-white/30' : 'bg-white/15'),
            )}
          >
            {item.icon}
          </button>
        ))}
      </div>
      {/* wallpaper light streak showing through the glass */}
      <svg viewBox="0 0 100 40" className="ml-auto h-10 w-[100px]" fill="none" aria-hidden="true">
        <path d="M4 -3C34 6 60 22 78 44" stroke="#6fb0ec" strokeWidth="11" opacity=".35" />
        <path d="M4 -3C34 6 60 22 78 44" stroke="#a9d2f8" strokeWidth="5" opacity=".8" />
      </svg>
      <div className="ml-[100px] flex h-full items-center">
        <Grip />
        <span className="ml-2 font-['Open_Sans',sans-serif] text-[12px] leading-4">EN</span>
        <button aria-label="Show hidden icons" className="ml-4">
          <svg width="8" height="4" viewBox="0 0 8 4"><path d="M0 4h8L4 0z" fill="#fff" /></svg>
        </button>
        <div className="ml-3 flex gap-2">
          <Svg size={16} view={16}>
            <path d="M2 1v14" stroke="#fff" strokeWidth="2" />
            <path d="M3 2h8v6H3z" fill="#fff" />
            <circle cx="11" cy="11" r="4.500" fill="#d92424" />
            <path d="M9 9l4 4M13 9l-4 4" stroke="#fff" strokeWidth="1.500" />
          </Svg>
          <Svg size={16} view={16}>
            <path d="M2 3h8v12H2zM4 1h4v2H4z" stroke="#fff" strokeWidth="1.500" />
            <path d="M7 6h8v3l-2 2v4h-4v-4L7 9zM9 3v3M13 3v3" fill="#fff" stroke="#fff" />
          </Svg>
          <Svg size={16} view={16}>
            <path d="M2 15v-3M5 15v-5M8 15V8M11 15V6M14 15V3" stroke="#fff" strokeWidth="2" />
          </Svg>
          <Svg size={16} view={16}>
            <path d="M1 5h3l4-4v14l-4-4H1z" fill="#fff" />
            <path d="M10 5c1 2 1 4 0 6M12.500 3c2 3 2 7 0 10" stroke="#fff" />
          </Svg>
        </div>
        <div className="ml-3 w-[72px] text-center font-['Open_Sans','DejaVu_Sans',sans-serif] text-[11px] leading-[17px]">
          <div>04:38 ب.ظ</div>
          <div>۲۰۲۰/۰۹/۰۶</div>
        </div>
        <button aria-label="Show desktop" className="ml-1 h-full w-[14px] border border-[#6d91b8] bg-linear-to-b from-white/30 to-transparent" />
      </div>
    </footer>
  );
}

/* ---------- window ---------- */

function TitleBar() {
  return (
    <header className="flex h-[22px] shrink-0 justify-between border-b-2 border-[#24456e] bg-[linear-gradient(90deg,#9fcaf0_0%,#b3d6f8_30%,#a4cef6_35%,#bbdcfd_38%,#b3d6fa_53%,#2f6298_54%,#9bc6ef_55%,#35689e_57%,#275588_80%,#2e5c90_89%,#9fb6cf_94%,#7295bb_100%)]">
      <div className="flex items-center gap-[6px]">
        <BuilderIcon size={15} />
        <h1 className="font-['Roboto',sans-serif] text-[12px] leading-5">DesignBuilder - meymandACDnahayi-isi.dsb - Activity - Untitled, Building 1</h1>
      </div>
      <div className="mr-1 flex h-[17px] overflow-hidden rounded-b-[4px] border border-t-0 border-[#22354b]">
        <button aria-label="Minimize" className="flex w-7 items-center justify-center bg-linear-to-b from-[#c2cfdd] to-[#7791ab]">
          <svg width="12" height="5" viewBox="0 0 12 5"><rect x=".5" y=".5" width="11" height="4" fill="#fff" stroke="#4c5868" /></svg>
        </button>
        <button aria-label="Restore" className="flex w-[26px] items-center justify-center border-x border-[#3e546c] bg-linear-to-b from-[#c2cfdd] to-[#7791ab]">
          <svg width="12" height="12" viewBox="0 0 12 12"><path d="M3.500.5h8v8h-8z" fill="#fff" stroke="#4c5868" /><path d="M.5 3.500h8v8h-8z" fill="#fff" stroke="#4c5868" /><path d="M3.500 6.500h2v2h-2z" fill="#7791ab" stroke="#4c5868" /></svg>
        </button>
        <button aria-label="Close" className="flex w-[47px] items-center justify-center bg-linear-to-b from-[#e0a097] via-[#c8412b] to-[#b83a20]">
          <svg width="12" height="10" viewBox="0 0 12 10"><path d="M2 1l8 8M10 1 2 9" stroke="#523030" strokeWidth="4" /><path d="M2 1l8 8M10 1 2 9" stroke="#fff" strokeWidth="2.500" /></svg>
        </button>
      </div>
    </header>
  );
}

const toolbar: [string, () => ReactNode][][] = [
  [['New', NewIcon], ['Open', OpenIcon], ['Save', SaveIcon], ['Print', PrintIcon]],
  [['Edit', EditIcon]],
  [['Settings', WrenchIcon], ['Clear', EraserIcon], ['Load data', DbLoadIcon], ['Save data', DbSaveIcon]],
  [['Load building template', HouseIcon], ['Load templates', LayersIcon]],
  [['Model options', OptionsIcon]],
  [['Target', TargetIcon]],
  [['Report', ReportIcon], ['LCA', LcaIcon]],
];

export default function App() {
  return (
    <div className="flex h-screen min-w-[1100px] flex-col overflow-hidden bg-[#efefef] font-['Liberation_Sans',Arial,sans-serif] text-black">
      <TitleBar />
      <div className="flex h-6 shrink-0 border-b border-[#a0a0a0] pt-px">
        <nav className="flex flex-1 items-center gap-[15px] border-t border-r border-[#a0a0a0] border-t-white pl-[19px] font-['Noto_Sans',sans-serif] text-[12px]">
          {['File', 'Edit', 'Go', 'View', 'Tools', 'Help'].map((m) => <button key={m}>{m}</button>)}
        </nav>
        <div className="ml-px flex w-[57px] items-center justify-center bg-white">
          <svg width="30" height="22" viewBox="0 0 30 22" fill="none">
            <path d="M6 10C2 7 1 5 3 4l5 1M22 18c4 1 6 0 4-3" stroke="#52b06a" />
            <text x="7" y="17" fontSize="22" fontWeight="bold" fontStyle="italic" fill="#d9152c" fontFamily="Liberation Sans, sans-serif">e</text>
            <path d="M22 4l-2 12M17 9h10" stroke="#1c4fa5" strokeWidth="3" />
          </svg>
        </div>
      </div>
      <div className="flex h-8 shrink-0 items-center gap-[7px] border-b border-[#a0a0a0] pl-[6px]">
        {toolbar.map((group, i) => [
          i > 0 && <span key={i} className="h-[26px] w-px bg-[#a0a0a0]" />,
          ...group.map(([name, Icon]) => <button key={name} aria-label={name}><Icon /></button>),
        ])}
      </div>
      <main className="mt-px flex min-h-0 flex-1 bg-[#adadad] bg-[linear-gradient(#8b8781,#a9a8a6_42px,#adadad_60px)]">
        <Navigator />
        <Splitter dir="left" />
        <section className="flex min-w-0 flex-1 flex-col">
          <PaneTitle className="pl-[7px]">Untitled, Building 1</PaneTitle>
          <Tabs tabs={topTabs} />
          <div className="flex min-h-0 flex-1 flex-col border border-[#808080] bg-white">
            <ActivityForm />
          </div>
          <Tabs tabs={bottomTabs} bottom />
        </section>
        <Splitter dir="right" />
        <Help />
      </main>
      <div className="flex h-[21px] shrink-0 items-center pl-1 text-[11px]">Edit Activity Data...</div>
      <Taskbar />
    </div>
  );
}
